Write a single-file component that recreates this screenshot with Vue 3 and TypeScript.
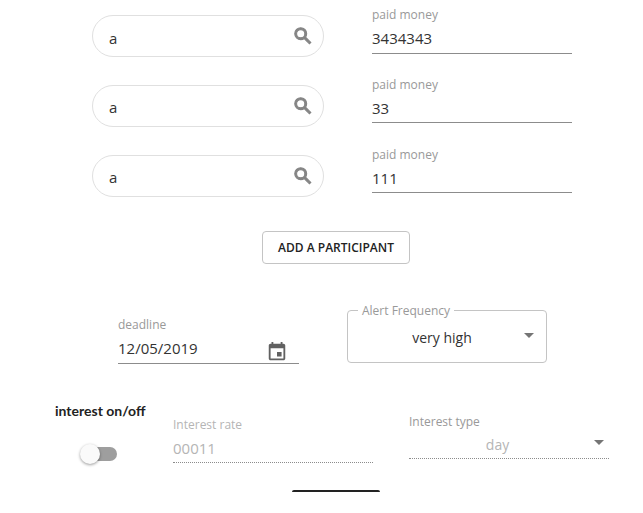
<template>
  <div class="page">
    <div class="participants">
      <div v-for="(p, index) in participants" :key="index" class="participant">
        <div class="search-pill">
          <span class="search-value">{{ p.name }}</span>
          <svg class="search-icon" viewBox="0 0 24 24" width="22" height="22">
            <path d="M15.5 14h-.79l-.28-.27A6.47 6.47 0 0 0 16 9.5 6.5 6.5 0 1 0 9.5 16c1.61 0 3.09-.59 4.23-1.57l.27.28v.79l5 4.99L20.49 19l-4.99-5zm-6 0C7.01 14 5 11.99 5 9.5S7.01 5 9.5 5 14 7.01 14 9.5 11.99 14 9.5 14z" />
          </svg>
        </div>
        <div class="field paid">
          <label>paid money</label>
          <div class="field-value">{{ p.paid }}</div>
        </div>
      </div>
    </div>

    <div class="add-row">
      <button class="add-btn">ADD A PARTICIPANT</button>
    </div>

    <div class="deadline-row">
      <div class="field deadline">
        <label>deadline</label>
        <div class="field-value with-icon">
          <span class="date-text">12/05/2019</span>
          <svg class="calendar-icon" viewBox="0 0 24 24" width="22" height="22">
            <path d="M17 12h-5v5h5v-5zM16 1v2H8V1H6v2H5c-1.11 0-1.99.9-1.99 2L3 19c0 1.1.89 2 2 2h14c1.1 0 2-.9 2-2V5c0-1.1-.9-2-2-2h-1V1h-2zm3 18H5V8h14v11z" />
          </svg>
        </div>
      </div>
      <fieldset class="outlined">
        <legend>Alert Frequency</legend>
        <span class="outlined-value">very high</span>
        <span class="caret"></span>
      </fieldset>
    </div>

    <div class="interest-row">
      <div class="toggle-col">
        <div class="toggle-title">interest on/off</div>
        <div class="toggle">
          <span class="track"></span>
          <span class="thumb"></span>
        </div>
      </div>
      <div class="field disabled rate">
        <label>Interest rate</label>
        <div class="field-value">00011</div>
      </div>
      <div class="field disabled type">
        <label>Interest type</label>
        <div class="field-value centered">
          <span>day</span>
          <span class="caret"></span>
        </div>
      </div>
    </div>

    <div class="bottom-row">
      <div class="cut-btn"></div>
    </div>
  </div>
</template>

<script setup lang="ts">
const participants = [
  { name: 'a', paid: '3434343' },
  { name: 'a', paid: '33' },
  { name: 'a', paid: '111' }
];
</script>

<style>
html,
body {
  background: #fff;
}
</style>

<style scoped>
.page {
  width: 643px;
  height: 513px;
  overflow: hidden;
  font-family: "Open Sans", "Noto Sans", sans-serif;
  color: #333;
  padding-top: 7.3px;
  box-sizing: border-box;
}

.participants {
  display: flex;
  flex-direction: column;
  padding-left: 92px;
}

.participant {
  display: flex;
  gap: 48px;
  height: 69.7px;
}

.search-pill {
  width: 232px;
  height: 42px;
  margin-top: 8px;
  box-sizing: border-box;
  border: 1px solid #e0e0e0;
  border-radius: 21px;
  display: flex;
  align-items: center;
  justify-content: space-between;
  padding: 0 9px 0 16px;
}

.search-value {
  font-size: 15px;
  color: #333;
  margin-top: 3px;
}

.search-icon {
  fill: #858585;
  margin-top: 0;
  stroke: #858585;
  stroke-width: 1.2;
}

.field {
  display: flex;
  flex-direction: column;
}

.field label {
  font-size: 12px;
  line-height: 16px;
  color: #999;
}

.field-value {
  font-size: 15px;
  line-height: 24px;
  height: 30.4px;
  padding-top: 3px;
  box-sizing: border-box;
  border-bottom: 1px solid #8c8c8c;
  color: #333;
}

.paid {
  width: 200px;
}

.add-row {
  display: flex;
  justify-content: center;
  margin-top: 15px;
  padding-left: 29px;
}

.add-btn {
  width: 148px;
  height: 33px;
  background: #fff;
  border: 1px solid #c4c4c4;
  border-radius: 4px;
  font-family: inherit;
  font-size: 12px;
  font-weight: 600;
  color: #222;
  padding: 0;
}

.deadline-row {
  display: flex;
  margin-top: 46px;
  padding-left: 118px;
  gap: 48px;
}

.deadline {
  width: 181px;
  margin-top: 7px;
}

.with-icon {
  display: flex;
  justify-content: space-between;
  align-items: center;
}

.date-text {
  margin-top: -4px;
}

.calendar-icon {
  fill: #616161;
  margin: 4px 11px 0 0;
}

.outlined {
  position: relative;
  width: 200px;
  height: 58px;
  margin: -5px 0 0;
  padding: 0 20px 0 10px;
  box-sizing: border-box;
  border: 1px solid #c4c4c4;
  border-radius: 4px;
  text-align: center;
}

.outlined legend {
  font-size: 12px;
  line-height: 11px;
  color: #999;
  padding: 0 4px;
  margin-left: 0;
  text-align: left;
}

.outlined-value {
  font-size: 14px;
  line-height: 30px;
  color: #333;
  display: block;
  margin-top: 7px;
}

.caret {
  width: 0;
  height: 0;
  border-left: 5px solid transparent;
  border-right: 5px solid transparent;
  border-top: 5px solid #757575;
}

.outlined .caret {
  position: absolute;
  right: 12px;
  top: 17px;
}

.interest-row {
  display: flex;
  margin-top: 39px;
  padding-left: 55px;
}

.toggle-col {
  width: 118px;
}

.toggle-title {
  font-family: Lato, sans-serif;
  font-weight: 700;
  font-size: 14px;
  line-height: 16px;
  color: #222;
}

.toggle {
  position: relative;
  width: 38px;
  height: 22px;
  margin: 24px 0 0 25px;
}

.track {
  position: absolute;
  left: 2px;
  top: 4px;
  width: 35px;
  height: 14px;
  border-radius: 7px;
  background: #9e9e9e;
}

.thumb {
  position: absolute;
  left: 0;
  top: 1px;
  width: 20px;
  height: 20px;
  border-radius: 50%;
  background: #fafafa;
  box-shadow: 0 1px 3px rgba(0, 0, 0, 0.4);
}

.disabled label {
  color: #b5b5b5;
}

.disabled .field-value {
  color: #b5b5b5;
  border-bottom: 1px dotted #8c8c8c;
}

.rate {
  width: 200px;
  margin-top: 14px;
}

.type {
  width: 200px;
  margin-left: 36px;
  margin-top: 11px;
}

.type label {
  color: #999;
}

.disabled .centered {
  position: relative;
  text-align: center;
  font-size: 14px;
  padding: 3px 23px 0 0;
  height: 29.4px;
}

.centered .caret {
  position: absolute;
  right: 5px;
  top: 10px;
}

.bottom-row {
  display: flex;
  justify-content: center;
  margin-top: 25px;
  padding-left: 29px;
}

.cut-btn {
  width: 88px;
  height: 2px;
  background: #222;
  border-radius: 4px 4px 0 0;
}
</style>
